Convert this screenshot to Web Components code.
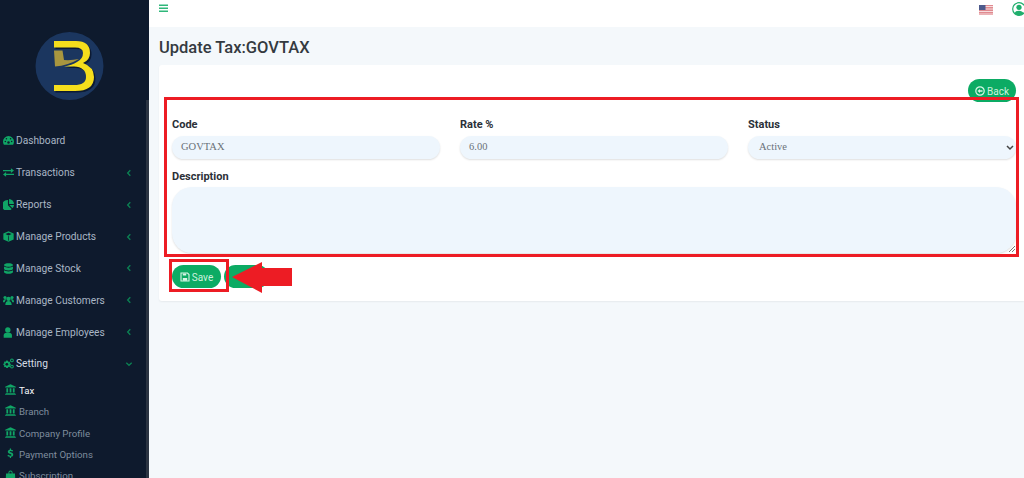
<!DOCTYPE html>
<html lang="en"><head><meta charset="utf-8"><title>Update Tax</title>
<style>html,body{margin:0;height:100%;overflow:hidden;background:#f4f8fb}body{font-family:Roboto,"Noto Sans",sans-serif}</style>
</head><body>
<app-shell>
  <side-nav slot="side">
    <nav-item label="Dashboard" icon="gauge"></nav-item>
    <nav-item label="Transactions" icon="swap" arrow="left"></nav-item>
    <nav-item label="Reports" icon="pie" arrow="left"></nav-item>
    <nav-item label="Manage Products" icon="box" arrow="left"></nav-item>
    <nav-item label="Manage Stock" icon="db" arrow="left"></nav-item>
    <nav-item label="Manage Customers" icon="users" arrow="left"></nav-item>
    <nav-item label="Manage Employees" icon="user" arrow="left"></nav-item>
    <nav-item label="Setting" icon="cogs" arrow="down" active></nav-item>
    <nav-item sub label="Tax" icon="bank" active></nav-item>
    <nav-item sub label="Branch" icon="bank"></nav-item>
    <nav-item sub label="Company Profile" icon="bank"></nav-item>
    <nav-item sub label="Payment Options" icon="dollar"></nav-item>
    <nav-item sub label="Subscription" icon="bag"></nav-item>
  </side-nav>
  <top-bar slot="top"></top-bar>
  <page-title slot="main">Update Tax:GOVTAX</page-title>
  <tax-card slot="main">
    <pill-button slot="back" icon="back">Back</pill-button>
    <form-field slot="fields" label="Code">GOVTAX</form-field>
    <form-field slot="fields" label="Rate %">6.00</form-field>
    <form-field slot="fields" label="Status" select>Active</form-field>
    <form-field slot="desc" label="Description" area></form-field>
    <pill-button slot="actions" icon="save">Save</pill-button>
    <pill-button slot="actions" wide></pill-button>
  </tax-card>
</app-shell>
<script>
const ICONS={
gauge:'<path d="M8 1.500a8 8 0 0 0-8 8c0 1.800.5 3.300 1.300 4.500h13.400c.8-1.200 1.300-2.700 1.300-4.500a8 8 0 0 0-8-8z"/><g fill="#0e1a2d"><circle cx="3.400" cy="9.500" r="1.100"/><circle cx="5" cy="5.600" r="1.100"/><circle cx="12.600" cy="9.500" r="1.100"/><circle cx="11" cy="5.600" r="1.100"/><circle cx="8" cy="10.800" r="1.800"/></g>',
swap:'<path d="M0 4.200h11.500V1.800L16 5.200l-4.500 3.400V6.200H0zM16 9.800H4.500V7.400L0 10.800l4.500 3.400v-2.400H16z"/>',
pie:'<path d="M7.200 1.500v7.600l5.400 5.400A8 8 0 1 1 7.200 1.500z"/><path d="M8.800 0a7.400 7.400 0 0 1 7.200 7.200H8.800z"/><path d="M9.300 8.800H16a7.600 7.600 0 0 1-2.200 4.700z"/>',
box:'<path d="M8 .5 15.500 3.500v9L8 15.800.5 12.500v-9z"/><path d="M8 2.600 3.500 4.500 8 6.400l4.500-1.900z" fill="#0e1a2d"/><path d="M8 7.500v6.500" stroke="#0e1a2d" stroke-width="1.100"/>',
db:'<path d="M1.500 3C1.500 1.300 4.400.4 8 .4s6.500.9 6.500 2.600S11.600 5.600 8 5.600 1.500 4.700 1.500 3zM1.500 5.200C3 6.300 5.400 6.800 8 6.800s5-.5 6.500-1.600v3.200c0 1.500-2.900 2.500-6.500 2.500s-6.500-1-6.500-2.500zM1.500 10.600c1.500 1.100 3.900 1.600 6.500 1.600s5-.5 6.500-1.600V13c0 1.700-2.900 2.600-6.500 2.600s-6.500-.9-6.500-2.600z"/>',
users:'<circle cx="8" cy="5.600" r="3.200"/><circle cx="2.900" cy="3.600" r="2.300"/><circle cx="13.100" cy="3.600" r="2.300"/><path d="M3.400 14.500c0-3.400 1.400-5.700 4.600-5.700s4.600 2.300 4.600 5.700zM0 10.500c0-3 .8-4.500 2.900-4.500.8 0 1.400.2 1.900.7-1.300 1-2.100 2.300-2.400 3.800H0zM16 10.500c0-3-.8-4.500-2.900-4.500-.8 0-1.400.2-1.900.7 1.300 1 2.100 2.300 2.400 3.800H16z"/>',
user:'<circle cx="7" cy="4.300" r="3.900"/><path d="M1 15.500v-3.300C1 9.700 2.800 8.400 4.600 8.400h4.800c1.800 0 3.600 1.300 3.600 3.800v3.300z"/>',
cogs:'<path d="M6 3.800l1.100.2.500 1.500 1.500-.5 1.300 1.300-.6 1.400 1.500.7v1.800l-1.500.6.600 1.500-1.300 1.300-1.500-.6-.6 1.500H4.700l-.5-1.500-1.500.6-1.300-1.300.6-1.500L.5 10V8.200L2 7.500l-.6-1.400 1.300-1.300 1.500.5.500-1.500z"/><circle cx="5.600" cy="9.100" r="2" fill="#0e1a2d"/><g fill="none" stroke="currentColor" stroke-width="1.500"><circle cx="13" cy="3.500" r="2"/><circle cx="13" cy="12.500" r="2"/></g>',
bank:'<path d="M8 .3 15.800 4v1.200H.2V4zM2 6h2.600v6.300H2zM6.700 6h2.600v6.300H6.700zM11.400 6H14v6.300h-2.600zM1 13h14v1.300H1zM.2 14.600h15.600v1.200H.2z"/>',
dollar:'<path d="M7 .8h1.800v1.700c1.300.1 2.300.5 3 1l-.8 1.600c-.8-.5-1.800-.9-2.800-.9-1 0-1.500.4-1.500.9 0 1.600 5.300.9 5.300 4.600 0 1.700-1.200 2.800-3.200 3.100v1.900H7v-1.900c-1.400-.1-2.700-.6-3.500-1.300l.9-1.600c.9.700 2 1.200 3.300 1.200 1 0 1.700-.4 1.700-1.100 0-1.700-5.300-1-5.300-4.500 0-1.600 1.100-2.700 2.900-3z"/>',
bag:'<path d="M5 5V3.800a3 3 0 0 1 6 0V5h3.500l.5 10H1L1.500 5zm1.300 0h3.400V3.800a1.700 1.700 0 0 0-3.400 0z"/>'
};
class AppShell extends HTMLElement{constructor(){super();this.attachShadow({mode:'open'}).innerHTML=`<style>
:host{display:grid;grid-template-columns:149px 1fr;height:478px;overflow:hidden;position:relative}
.right{display:flex;flex-direction:column;min-width:0;background:#f4f8fb}
main{display:flex;flex-direction:column;padding:0 0 0 10px}
</style><slot name="side"></slot><div class="right"><slot name="top"></slot><main><slot name="main"></slot></main></div>`}}
class SideNav extends HTMLElement{constructor(){super();this.attachShadow({mode:'open'}).innerHTML=`<style>
:host{display:flex;background:#0e1a2d;height:478px;overflow:hidden;position:relative}
.col{flex:1;min-width:0}
.logo{height:125px;display:flex}
svg{display:block}
.bar{width:3px;margin-top:100px;background:#2b3442}
</style><div class="col"><div class="logo"><svg width="146" height="125" viewBox="0 0 146 125" role="img" aria-label="logo">
<circle cx="69.500" cy="66" r="34" fill="#1b365f"/>
<path d="M54 50.500H62.500L64 60Q72 60.500 79 59Q68 65.500 55 66.500Z" fill="#a8963f"/>
<path transform="translate(1.500 1.500)" fill="#0c1a33" d="M54 41H76Q90 41 90 53Q90 60 83 63Q94 67 94 77Q94 91 75 91H54V85H74Q86 85 86 77Q86 67 74 66.500H64Q72 65 77 62Q83 59 83 53Q83 47.500 75 47.500H54Z"/>
<path fill="#f5de1c" d="M54 41H76Q90 41 90 53Q90 60 83 63Q94 67 94 77Q94 91 75 91H54V85H74Q86 85 86 77Q86 67 74 66.500H64Q72 65 77 62Q83 59 83 53Q83 47.500 75 47.500H54Z"/>
</svg></div><slot></slot></div><div class="bar"></div>`}}
class NavItem extends HTMLElement{connectedCallback(){if(this.shadowRoot)return;const sub=this.hasAttribute('sub'),a=this.getAttribute('arrow'),act=this.hasAttribute('active');
const arrow=a?`<svg class="arr" width="8" height="8" viewBox="0 0 8 8" fill="none" stroke="#0b7f52" stroke-width="1.400">${a=='left'?'<path d="M5.300 1.300 2.700 4l2.600 2.700"/>':'<path d="M1.300 2.700 4 5.300l2.700-2.600"/>'}</svg>`:'';
this.attachShadow({mode:'open'}).innerHTML=`<style>
:host{display:flex;align-items:center;height:${sub?21.4:31.86}px;padding-left:${sub?4.5:2.5}px;color:${act?(sub?'#f4f6f8':'#d5dde6'):(sub?'#7f8d9e':'#a9b6c5')};font:${sub?9.7:10.2}px/1 Roboto,sans-serif;white-space:nowrap}
.i{width:11px;height:11px;color:#10a566;fill:currentColor;flex:none;margin-right:${sub?3.5:2.5}px;margin-bottom:${sub?2:0}px}
span{flex:1;padding-top:${sub?0:1.2}px}
.arr{margin-right:13px;flex:none}
</style><svg class="i" viewBox="0 0 16 16">${ICONS[this.getAttribute('icon')]}</svg><span>${this.getAttribute('label')}</span>${arrow}`}}
class TopBar extends HTMLElement{constructor(){super();this.attachShadow({mode:'open'}).innerHTML=`<style>
:host{display:flex;align-items:flex-start;height:27px;background:#fff;padding:4px 0 0 10px;box-sizing:border-box;overflow:hidden}
.f{margin:1px 0 0 auto;display:block}.u{margin:-2px -2px 0 19px;display:block;flex:none}
</style><svg width="9" height="9" viewBox="0 0 9 9" fill="#2fb77a"><path d="M0 .5h9V2H0zM0 3.500h9V5H0zM0 6.500h9V8H0z"/></svg>
<svg class="f" width="14" height="10" viewBox="0 0 14 10"><rect width="14" height="10" fill="#e08a90"/><path d="M0 1.500h14M0 4h14M0 6.500h14M0 9h14" stroke="#f6dcdd" stroke-width="1"/><rect width="6.500" height="5" fill="#4d5a8c"/></svg>
<svg class="u" width="14" height="14" viewBox="0 0 14 14"><circle cx="7" cy="7" r="6.300" fill="#fff" stroke="#1fae6c" stroke-width="1.200"/><circle cx="7" cy="5.300" r="2.600" fill="#1fae6c"/><path d="M2.500 11.500C3 9.500 5 8.700 7 8.700s4 .8 4.500 2.800A6 6 0 0 1 7 13.300a6 6 0 0 1-4.500-1.800z" fill="#1fae6c"/></svg>`}}
class PageTitle extends HTMLElement{constructor(){super();this.attachShadow({mode:'open'}).innerHTML=`<style>
:host{display:flex;align-items:center;box-sizing:border-box;height:38px;padding-top:5px;font:500 16.5px/1 Roboto,sans-serif;color:#343a40}
</style><slot></slot>`}}
class TaxCard extends HTMLElement{constructor(){super();this.attachShadow({mode:'open'}).innerHTML=`<style>
:host{display:block;background:#fff;height:236px;box-sizing:border-box;padding:14px 8px 0 13px;box-shadow:0 1px 2px rgba(0,0,0,.06);position:relative;border-radius:3px 0 0 3px}
.back{display:flex;justify-content:flex-end;height:23px}
.fields{display:grid;grid-template-columns:repeat(3,268px);column-gap:20px;margin-top:16px}
.desc{margin-top:11px}
.actions{display:flex;gap:3px;margin-top:12px}
.ov{position:absolute;box-sizing:border-box;border:3px solid #ed1c24;pointer-events:none}
.a{left:5px;top:32px;width:855px;height:160px}
.b{left:10px;top:194px;width:60px;height:33px}
.arrow{position:absolute;left:73px;top:196px}
</style><div class="back"><slot name="back"></slot></div><div class="fields"><slot name="fields"></slot></div><div class="desc"><slot name="desc"></slot></div><div class="actions"><slot name="actions"></slot></div>
<div class="ov a"></div><div class="ov b"></div>
<svg class="arrow" width="60" height="32" viewBox="0 0 60 32"><path d="M0 16 30 1V7H60V25H30V32z" fill="#ed1c24"/></svg>`}}
class FormField extends HTMLElement{connectedCallback(){if(this.shadowRoot)return;const area=this.hasAttribute('area'),sel=this.hasAttribute('select');
this.attachShadow({mode:'open'}).innerHTML=`<style>
:host{display:block}
label{display:block;font:700 11px/13px Roboto,sans-serif;color:#2b3038;margin-bottom:${area?4:5}px}
.box{position:relative;display:flex;align-items:center;box-sizing:border-box;height:${area?66:23}px;background:#eef6fd;border-radius:${area?'20px':'12px'};box-shadow:0 1px 2px rgba(0,0,0,.13);padding:0 9px 0 ${sel?11:9}px;font:10.500px/1 "Liberation Serif",serif;color:#6a7178}
svg{position:absolute;display:block}
.ch{right:2px;top:9px}.rs{right:1px;bottom:1px}
</style><label>${this.getAttribute('label')}</label><div class="box"><slot></slot>${sel?'<svg class="ch" width="8" height="6" viewBox="0 0 8 6" fill="none" stroke="#444" stroke-width="1.500"><path d="M1 1l3 3 3-3"/></svg>':''}${area?'<svg class="rs" width="7" height="7" viewBox="0 0 7 7" stroke="#777" stroke-width="1"><path d="M1 7 7 1M4 7l3-3"/></svg>':''}</div>`}}
class PillButton extends HTMLElement{connectedCallback(){if(this.shadowRoot)return;const ic=this.getAttribute('icon');
const g=ic=='back'?'<circle cx="5" cy="5" r="4.200" fill="none" stroke="#d8f5e6" stroke-width="1.200"/><path d="M2.500 5 5 2.900V4.200H7.500V5.800H5V7.100z" fill="#d8f5e6"/>':ic=='save'?'<path d="M1 1h6.500L9 2.500V9H1z" fill="none" stroke="#d8f5e6" stroke-width="1.100"/><path d="M2.800 1.500h3.400v2H2.800zM2.800 6h4.400v2.800H2.800z" fill="#d8f5e6"/>':'';
this.attachShadow({mode:'open'}).innerHTML=`<style>
:host{display:inline-flex;align-items:center;justify-content:center;gap:2px;box-sizing:border-box;height:23px;width:${this.hasAttribute('wide')?45:(ic=='back'?48:49)}px;border-radius:12px;background:#0cab64;color:#cdf1de;font:10px/1 Roboto,sans-serif}
svg{display:block;flex:none}
span{padding-top:2px}
</style>${g?`<svg width="10" height="10" viewBox="0 0 10 10">${g}</svg>`:''}<span><slot></slot></span>`}}
for(const [n,c] of Object.entries({'app-shell':AppShell,'side-nav':SideNav,'nav-item':NavItem,'top-bar':TopBar,'page-title':PageTitle,'tax-card':TaxCard,'form-field':FormField,'pill-button':PillButton}))customElements.define(n,c);
</script>
</body></html>
